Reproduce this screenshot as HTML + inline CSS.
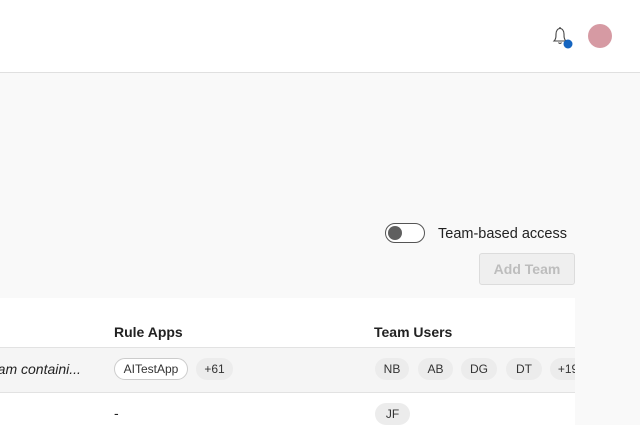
<!DOCTYPE html>
<html><head><style>
body{margin:0;width:640px;height:425px;overflow:hidden;background:#f9f9f9;font-family:"Liberation Sans",sans-serif;position:relative;color:#222}
.hdr{position:absolute;left:0;top:0;width:640px;height:72px;background:#fff;border-bottom:1px solid #e0e0e0}
.abs{position:absolute}
.panel{position:absolute;left:0;top:298px;width:575px;height:127px;background:#fff;overflow:hidden}
.chip{position:absolute;height:22px;line-height:22px;border-radius:11px;background:#ececec;font-size:12px;text-align:center;color:#333}
</style></head><body>
<div class="hdr">
<svg class="abs" style="left:550px;top:25px" width="24" height="26" viewBox="0 0 24 26"><path d="M4 16 C6 14 6 12 6 9 C6 5.5 8 3.5 10 3.5 C12 3.5 14 5.5 14 9 C14 12 14 14 16 16 Z" fill="none" stroke="#444" stroke-width="1.1"/><path d="M8.5 17.5 Q10 19.5 11.5 17.5" fill="none" stroke="#444" stroke-width="1.1"/><circle cx="10" cy="2.8" r="0.8" fill="#444"/><circle cx="18" cy="19" r="4.5" fill="#1565c0"/></svg>
<div class="abs" style="left:588px;top:24px;width:24px;height:24px;border-radius:50%;background:#d69aa3"></div>
</div>
<div class="abs" style="left:385px;top:223px;width:38px;height:18px;border:1px solid #555;border-radius:10px;background:#fff"></div>
<div class="abs" style="left:388px;top:226px;width:14px;height:14px;border-radius:50%;background:#5f5f5f"></div>
<div class="abs" style="left:438px;top:226px;font-size:14.5px;color:#222">Team-based access</div>
<div class="abs" style="left:479px;top:253px;width:94px;height:30px;border:1px solid #dcdcdc;border-radius:3px;background:#efefef;color:#bdbdbd;font-weight:bold;font-size:14px;line-height:30px;text-align:center">Add Team</div>
<div class="panel">
<div class="abs" style="left:114px;top:26px;font-size:14px;font-weight:bold">Rule Apps</div>
<div class="abs" style="left:374px;top:26px;font-size:14px;font-weight:bold">Team Users</div>
<div class="abs" style="left:0;top:49px;width:575px;height:44px;background:#f5f5f5;border-top:1px solid #e2e2e2;border-bottom:1px solid #e2e2e2"></div>
<div class="abs" style="left:-14px;top:63px;font-size:14px;font-style:italic">team containi...</div>
<div class="chip" style="left:114px;top:60px;width:72px;background:#fff;border:1px solid #ccc;height:20px;line-height:20px">AITestApp</div>
<div class="chip" style="left:196px;top:60px;width:37px">+61</div>
<div class="chip" style="left:375px;top:60px;width:34px">NB</div>
<div class="chip" style="left:418px;top:60px;width:35px">AB</div>
<div class="chip" style="left:461px;top:60px;width:36px">DG</div>
<div class="chip" style="left:506px;top:60px;width:36px">DT</div>
<div class="chip" style="left:550px;top:60px;width:36px">+19</div>
<div class="abs" style="left:114px;top:107px;font-size:14px">-</div>
<div class="chip" style="left:375px;top:105px;width:35px">JF</div>
</div>
</body></html>
